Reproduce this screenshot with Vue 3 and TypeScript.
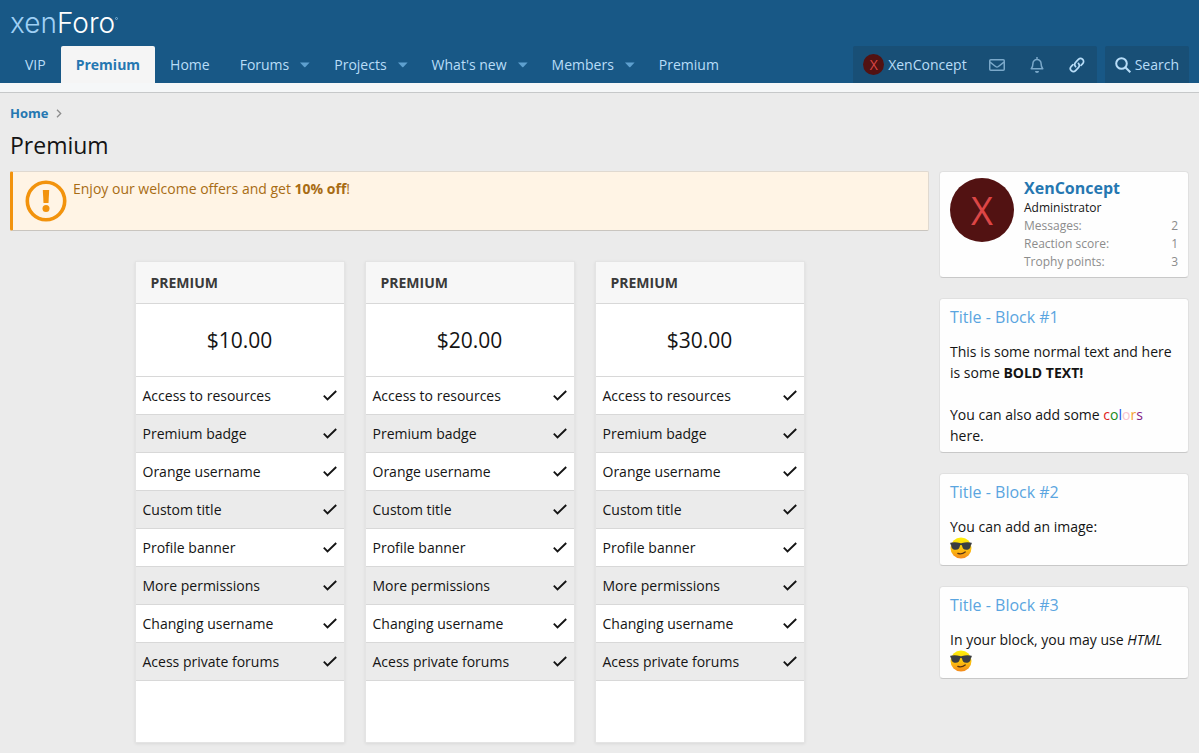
<script setup lang="ts">
interface NavItem {
  label: string
  active?: boolean
  menu?: boolean
}

interface Plan {
  id: number
  name: string
  price: string
}

const navItems: NavItem[] = [
  { label: 'VIP' },
  { label: 'Premium', active: true },
  { label: 'Home' },
  { label: 'Forums', menu: true },
  { label: 'Projects', menu: true },
  { label: "What's new", menu: true },
  { label: 'Members', menu: true },
  { label: 'Premium' },
]

const plans: Plan[] = [
  { id: 1, name: 'Premium', price: '$10.00' },
  { id: 2, name: 'Premium', price: '$20.00' },
  { id: 3, name: 'Premium', price: '$30.00' },
]

const features: string[] = [
  'Access to resources',
  'Premium badge',
  'Orange username',
  'Custom title',
  'Profile banner',
  'More permissions',
  'Changing username',
  'Acess private forums',
]

const stats = [
  { label: 'Messages:', value: 2 },
  { label: 'Reaction score:', value: 1 },
  { label: 'Trophy points:', value: 3 },
]
</script>

<template>
  <div class="page">
    <header class="header">
      <a class="logo" href="#"><span class="logo-light">xen</span>Foro<span class="logo-mark"></span></a>
      <nav class="nav">
        <ul class="nav-list">
          <li v-for="(item, i) in navItems" :key="i" class="nav-item" :class="{ active: item.active }">
            <a class="nav-link" :class="{ split: item.menu }" href="#">{{ item.label }}</a>
            <button v-if="item.menu" class="nav-toggle" type="button" :aria-label="item.label + ' menu'">
              <svg width="10" height="6" viewBox="0 0 10 6"><path d="M0 .5h9.6L5.4 5a.9.9 0 0 1-1.200 0z" fill="currentColor" /></svg>
            </button>
          </li>
        </ul>
        <div class="tools">
          <div class="tool-group">
            <a class="tool user" href="#"><span class="avatar small">X</span><span>XenConcept</span></a>
            <a class="tool icon dim" href="#" aria-label="Conversations">
              <svg width="16" height="12" viewBox="0 0 16 12" fill="none" stroke="currentColor" stroke-width="1.500"><rect x=".75" y=".75" width="14.500" height="10.500" rx="1" /><path d="M1 3.200l5.600 4.300q1.400 1 2.800 0L15 3.200" /></svg>
            </a>
            <a class="tool icon dim" href="#" aria-label="Alerts">
              <svg width="14" height="16" viewBox="0 0 14 16" fill="none" stroke="currentColor" stroke-width="1.500" stroke-linejoin="round"><path d="M7 0v2M1.200 11.700c1.300-1.400 1.700-2.200 1.700-5A4.100 4.100 0 0 1 7 2.500a4.100 4.100 0 0 1 4.100 4.200c0 2.800.4 3.600 1.700 5z" /><path d="M5 14h4a2 2 0 0 1-4 0z" fill="currentColor" stroke="none" /></svg>
            </a>
            <a class="tool icon" href="#" aria-label="Links">
              <svg width="16" height="16" viewBox="0 0 16 16" fill="none" stroke="currentColor" stroke-width="1.700" stroke-linecap="round"><path d="M6.600 9.600a3 3 0 0 1 0-4.300l2.800-2.900a3 3 0 0 1 4.300 4.300l-1.700 1.700" /><path d="M9.400 6.400a3 3 0 0 1 0 4.300l-2.800 2.900a3 3 0 0 1-4.300-4.300L4 7.600" /></svg>
            </a>
          </div>
          <div class="tool-group">
            <a class="tool search" href="#">
              <svg width="16" height="16" viewBox="0 0 16 16" fill="none" stroke="currentColor" stroke-width="2"><circle cx="6.500" cy="6.500" r="5.300" /><path d="M10.300 10.300l5 5" /></svg>
              <span>Search</span>
            </a>
          </div>
        </div>
      </nav>
    </header>
    <div class="subnav"></div>

    <div class="body">
      <nav class="crumbs">
        <a href="#">Home</a>
        <svg width="6" height="9" viewBox="0 0 6 9" fill="none" stroke="#8c8c8c" stroke-width="1.300"><path d="M1 .8l3.700 3.700L1 8.200" /></svg>
      </nav>
      <h1 class="title">Premium</h1>

      <div class="columns">
        <main class="main">
          <div class="notice">
            <svg width="42" height="42" viewBox="0 0 42 42"><circle cx="21" cy="21" r="18.700" fill="none" stroke="#f2930d" stroke-width="3.600" /><path d="M17.800 10h6.400l-.7 13h-5z" fill="#f2930d" /><circle cx="21" cy="28.500" r="3.500" fill="#f2930d" /></svg>
            <p>Enjoy our welcome offers and get <strong>10% off</strong>!</p>
          </div>

          <div class="plans">
            <section v-for="plan in plans" :key="plan.id" class="plan">
              <h2 class="plan-name">{{ plan.name }}</h2>
              <div class="plan-price">{{ plan.price }}</div>
              <ul class="plan-features">
                <li v-for="feature in features" :key="feature">
                  <span>{{ feature }}</span>
                  <svg width="14" height="11" viewBox="0 0 14 11" fill="none" stroke="#141414" stroke-width="1.900"><path d="M.8 5.700l3.700 3.700L13.200 1" /></svg>
                </li>
              </ul>
              <div class="plan-footer"></div>
            </section>
          </div>
        </main>

        <aside class="sidebar">
          <section class="block member">
            <span class="avatar large">X</span>
            <div class="member-info">
              <a class="member-name" href="#">XenConcept</a>
              <div class="member-title">Administrator</div>
              <dl class="stat" v-for="stat in stats" :key="stat.label">
                <dt>{{ stat.label }}</dt>
                <dd>{{ stat.value }}</dd>
              </dl>
            </div>
          </section>

          <section class="block">
            <h3>Title - Block #1</h3>
            <p>This is some normal text and here is some <b>BOLD TEXT!</b></p>
            <p class="spaced">You can also add some <span class="c-red">c</span><span class="c-green">o</span><span class="c-blue">l</span><span class="c-pink">o</span><span class="c-orange">r</span><span class="c-purple">s</span> here.</p>
          </section>

          <section v-for="n in [2, 3]" :key="n" class="block">
            <h3>Title - Block #{{ n }}</h3>
            <p v-if="n === 2">You can add an image:</p>
            <p v-else>In your block, you may use <i>HTML</i></p>
            <svg class="smiley" width="22" height="22" viewBox="0 0 22 22" role="img" aria-label="Cool">
              <defs>
                <linearGradient :id="'face' + n" x1="0" y1="0" x2="0" y2="1">
                  <stop offset="0" stop-color="#fff00a" />
                  <stop offset=".5" stop-color="#fdc70c" />
                  <stop offset="1" stop-color="#f58a1c" />
                </linearGradient>
              </defs>
              <circle cx="11" cy="11" r="10.500" :fill="`url(#face${n})`" />
              <path d="M.3 5.700q5-.9 9.500.3 1.200.4 2.400 0 4.500-1.200 9.500-.3v1.500l-.8.6c-.3 3.600-1.500 5-4.500 5-2.900 0-3.900-1.300-4.500-4.500q-.9-.6-1.800 0c-.6 3.200-1.600 4.500-4.500 4.500-3 0-4.200-1.400-4.500-5l-.8-.6z" fill="#3a3d42" />
              <path d="M7.800 16.400q4 1.400 7.400-1.400" fill="none" stroke="#5a3512" stroke-width="1.300" stroke-linecap="round" />
            </svg>
          </section>
        </aside>
      </div>
    </div>
  </div>
</template>

<style>
html {
  background: #ebebeb;
}
body {
  overflow: hidden;
}
</style>

<style scoped>
.page {
  font-family: 'Open Sans', 'Noto Sans', sans-serif;
  font-size: 14px;
  line-height: 21px;
  color: #141414;
}
.page * {
  box-sizing: border-box;
}
a {
  color: inherit;
  text-decoration: none;
}
h1,
h2,
h3,
p,
ul,
dl,
dd {
  margin: 0;
  padding: 0;
}
ul {
  list-style: none;
}
svg {
  display: block;
  flex: none;
}

.header {
  background: #185886;
  color: #b8ddf8;
}
.logo {
  display: flex;
  height: 46px;
  padding: 0 10px;
  font-family: Inter, sans-serif;
  font-size: 28px;
  font-weight: 300;
  line-height: 46px;
  color: #fff;
}
.logo-light {
  color: #9fd0f5;
}
.logo-mark {
  width: 3px;
  height: 3px;
  margin-top: 17px;
  border: 1px solid #7fb0d6;
  border-radius: 50%;
}
.nav {
  display: flex;
  justify-content: space-between;
  padding: 0 10px;
}
.nav-list,
.nav-item,
.tools,
.tool-group,
.tool {
  display: flex;
}
.nav-item.active {
  background: #f5f5f5;
  color: #2577b1;
  font-weight: 700;
  border-radius: 2px 2px 0 0;
}
.nav-link {
  padding: 8px 15px;
}
.nav-link.split {
  padding-right: 0;
}
.nav-toggle {
  width: 30px;
  padding: 0 0 0 11px;
  border: 0;
  background: none;
  color: #5ea0cf;
}
.tools {
  gap: 8px;
}
.tool-group {
  background: #184f76;
  border-radius: 2px 2px 0 0;
}
.tool {
  align-items: center;
  height: 37px;
  padding: 0 10px;
  gap: 4px;
}
.tool.icon {
  justify-content: center;
  width: 40px;
}
.tool.dim {
  color: #7ba9ca;
}
.avatar {
  display: flex;
  flex: none;
  align-items: center;
  justify-content: center;
  border-radius: 50%;
  background: #521212;
  color: #dc4646;
  font-family: 'Open Sans', sans-serif;
}
.avatar.small {
  width: 21px;
  height: 21px;
  font-size: 14px;
}
.avatar.large {
  width: 64px;
  height: 64px;
  font-size: 38px;
}
.subnav {
  height: 10px;
  background: #f5f7f8;
  border-bottom: 1px solid #c6c8c9;
}

.body {
  padding: 10px;
}
.crumbs {
  display: flex;
  align-items: center;
  gap: 8px;
  height: 21px;
  font-size: 13px;
  font-weight: 700;
  color: #2577b1;
}
.title {
  margin: 5px 0 10px;
  font-size: 23px;
  font-weight: 400;
  line-height: 32px;
}
.columns {
  display: flex;
  align-items: flex-start;
  gap: 10px;
}
.main {
  flex: 1;
  min-width: 0;
}
.notice {
  display: flex;
  gap: 6px;
  min-height: 60px;
  padding: 8px 10px 8px 12px;
  background: #fff4e5;
  border: 1px solid #e0d9d0;
  border-bottom-color: #c9c5bf;
  border-left: 3px solid #f2930d;
  border-radius: 2px;
  color: #a86c14;
}
.notice p {
  margin-top: -2px;
}
.plans {
  display: flex;
  justify-content: center;
  gap: 20px;
  margin-top: 30px;
}
.plan {
  flex: 0 1 210px;
  border: 1px solid #e4e4e4;
  background: #fff;
  box-shadow: 0 1px 3px rgba(0, 0, 0, 0.08);
}
.plan-name {
  padding: 10px 15px;
  background: #f7f7f7;
  border-bottom: 1px solid #d8d8d8;
  font-size: 14px;
  font-weight: 700;
  text-transform: uppercase;
  color: #3a3a3a;
}
.plan-price {
  padding: 20px 0;
  border-bottom: 1px solid #d8d8d8;
  font-size: 21px;
  line-height: 32px;
  text-align: center;
}
.plan-features li {
  display: flex;
  align-items: center;
  justify-content: space-between;
  height: 38px;
  padding: 0 7px;
  border-bottom: 1px solid #d8d8d8;
}
.plan-features li:nth-child(even) {
  background: #ebebeb;
}
.plan-footer {
  height: 61px;
}

.sidebar {
  display: flex;
  flex-direction: column;
  gap: 20px;
  width: 250px;
}
.block {
  padding: 6px 10px;
  background: #fefefe;
  border: 1px solid #e0e0e0;
  border-bottom-color: #c8c8c8;
  border-radius: 4px;
}
.block h3 {
  margin-bottom: 12px;
  font-size: 16px;
  font-weight: 400;
  line-height: 24px;
  color: #5aa5e0;
}
.block .spaced {
  margin-top: 21px;
}
.member {
  display: flex;
  gap: 10px;
}
.member-info {
  flex: 1;
  font-size: 12px;
  line-height: 18px;
}
.member-name {
  display: block;
  font-size: 16px;
  font-weight: 700;
  line-height: 21px;
  color: #2577b1;
}
.stat {
  display: flex;
  justify-content: space-between;
  color: #8c8c8c;
}
.c-red {
  color: #e02020;
}
.c-green {
  color: #1a8a1a;
}
.c-blue {
  color: #2050e8;
}
.c-pink {
  color: #f8c4d0;
}
.c-orange {
  color: #f5a030;
}
.c-purple {
  color: #852085;
}
</style>
